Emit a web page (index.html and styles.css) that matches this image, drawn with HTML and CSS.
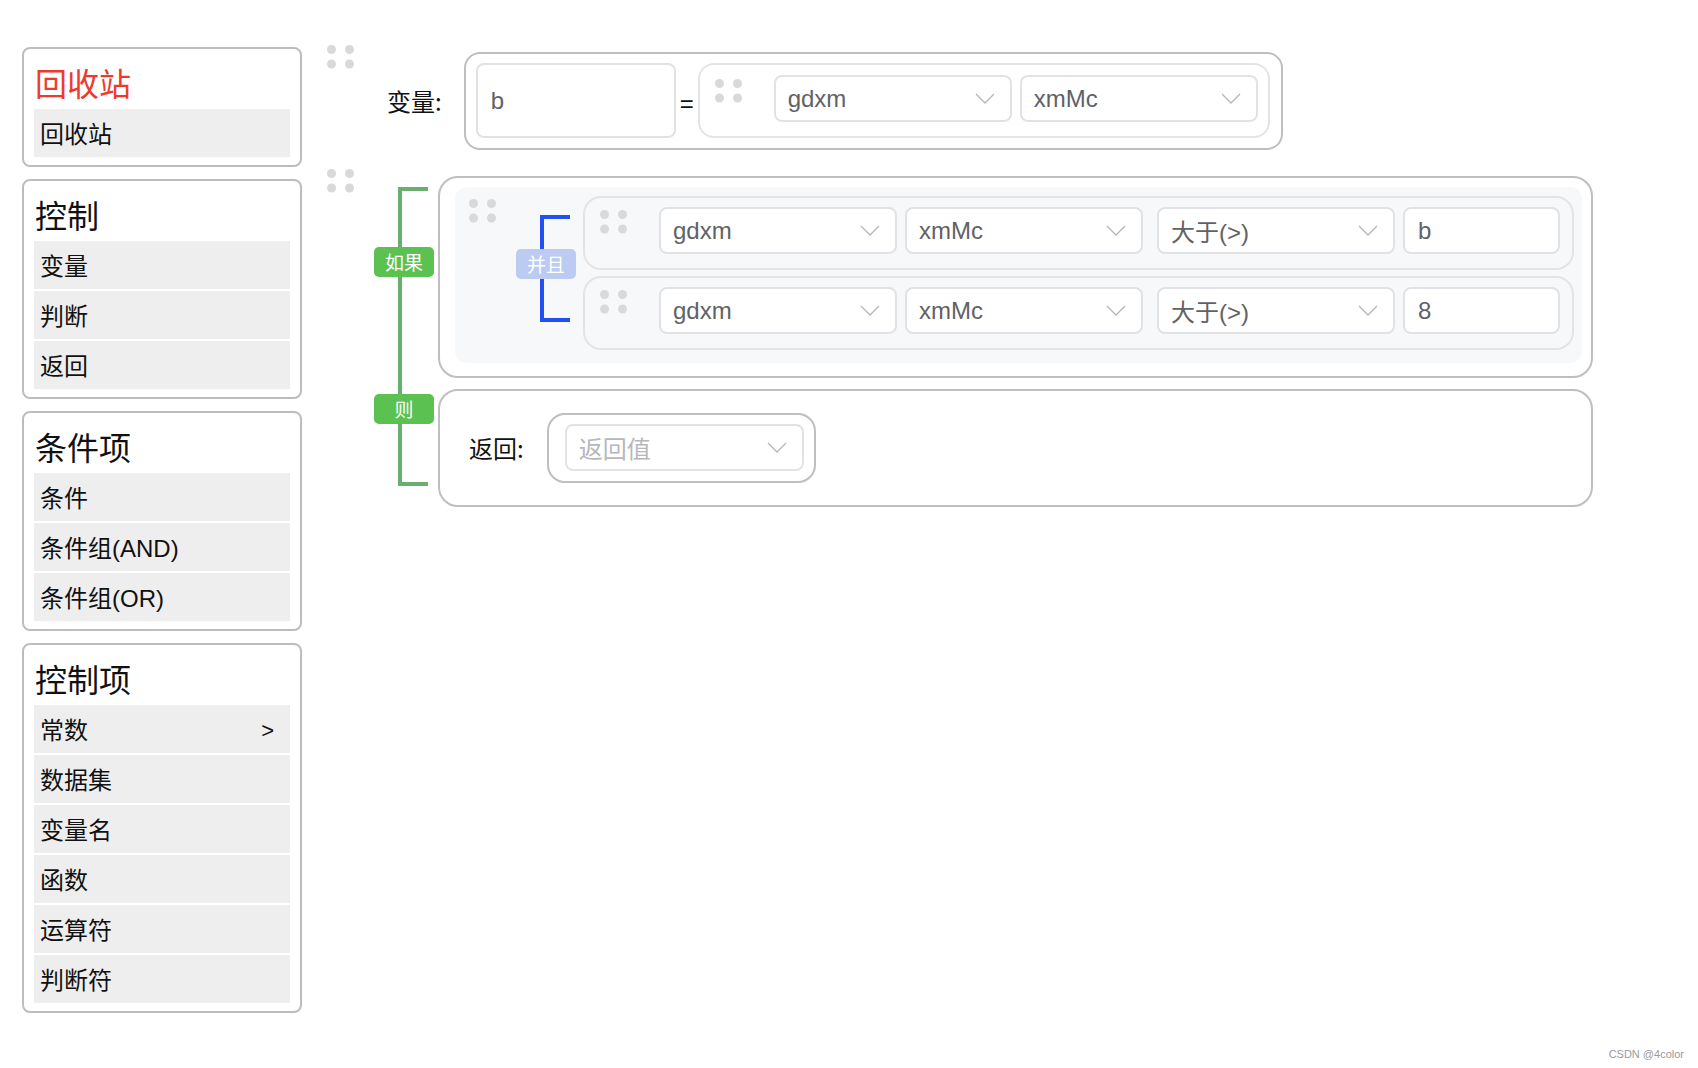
FILE: index.html
```html
<!DOCTYPE html>
<html lang="zh">
<head>
<meta charset="utf-8">
<title>规则编辑器</title>
<link rel="stylesheet" href="styles.css">
</head>
<body>
<div class="page">
  <aside class="sidebar">
    <section class="panel">
      <div class="panel-title red">回收站</div>
      <div class="item">回收站</div>
    </section>
    <section class="panel">
      <div class="panel-title">控制</div>
      <div class="item">变量</div>
      <div class="item">判断</div>
      <div class="item">返回</div>
    </section>
    <section class="panel">
      <div class="panel-title">条件项</div>
      <div class="item">条件</div>
      <div class="item">条件组(AND)</div>
      <div class="item">条件组(OR)</div>
    </section>
    <section class="panel">
      <div class="panel-title">控制项</div>
      <div class="item item-more"><span>常数</span><span class="more">&gt;</span></div>
      <div class="item">数据集</div>
      <div class="item">变量名</div>
      <div class="item">函数</div>
      <div class="item">运算符</div>
      <div class="item">判断符</div>
    </section>
  </aside>

  <main class="canvas">
    <div class="stmt">
      <span class="handle"><svg width="27" height="24" viewBox="0 0 27 24"><circle cx="4.5" cy="4.5" r="4.5"/><circle cx="22.5" cy="4.5" r="4.5"/><circle cx="4.5" cy="19" r="4.5"/><circle cx="22.5" cy="19" r="4.5"/></svg></span>
      <div class="var-body">
        <span class="var-label">变量:</span>
        <div class="var-box">
          <div class="field field-name">b</div>
          <span class="eq">=</span>
          <div class="expr">
            <span class="handle handle-inner"><svg width="27" height="24" viewBox="0 0 27 24"><circle cx="4.5" cy="4.5" r="4.5"/><circle cx="22.5" cy="4.5" r="4.5"/><circle cx="4.5" cy="19" r="4.5"/><circle cx="22.5" cy="19" r="4.5"/></svg></span>
            <div class="select"><span>gdxm</span><svg class="chev" width="20" height="11" viewBox="0 0 20 11"><polyline points="1,1 10,10 19,1"/></svg></div>
            <div class="select select-gap"><span>xmMc</span><svg class="chev" width="20" height="11" viewBox="0 0 20 11"><polyline points="1,1 10,10 19,1"/></svg></div>
          </div>
        </div>
      </div>
    </div>

    <div class="stmt stmt-if">
      <span class="handle"><svg width="27" height="24" viewBox="0 0 27 24"><circle cx="4.5" cy="4.5" r="4.5"/><circle cx="22.5" cy="4.5" r="4.5"/><circle cx="4.5" cy="19" r="4.5"/><circle cx="22.5" cy="19" r="4.5"/></svg></span>
      <div class="if-body">
        <div class="if-col">
          <div class="if-bracket"></div>
          <span class="badge badge-if">如果</span>
          <span class="badge badge-then">则</span>
        </div>
        <div class="if-boxes">
          <div class="if-box">
            <div class="group">
              <span class="handle handle-group"><svg width="27" height="24" viewBox="0 0 27 24"><circle cx="4.5" cy="4.5" r="4.5"/><circle cx="22.5" cy="4.5" r="4.5"/><circle cx="4.5" cy="19" r="4.5"/><circle cx="22.5" cy="19" r="4.5"/></svg></span>
              <div class="and-col">
                <div class="and-bracket"></div>
                <span class="badge badge-and">并且</span>
              </div>
              <div class="rows">
                <div class="cond">
                  <span class="handle handle-inner"><svg width="27" height="24" viewBox="0 0 27 24"><circle cx="4.5" cy="4.5" r="4.5"/><circle cx="22.5" cy="4.5" r="4.5"/><circle cx="4.5" cy="19" r="4.5"/><circle cx="22.5" cy="19" r="4.5"/></svg></span>
                  <div class="select"><span>gdxm</span><svg class="chev" width="20" height="11" viewBox="0 0 20 11"><polyline points="1,1 10,10 19,1"/></svg></div>
                  <div class="select select-gap"><span>xmMc</span><svg class="chev" width="20" height="11" viewBox="0 0 20 11"><polyline points="1,1 10,10 19,1"/></svg></div>
                  <div class="select select-op"><span>大于(&gt;)</span><svg class="chev" width="20" height="11" viewBox="0 0 20 11"><polyline points="1,1 10,10 19,1"/></svg></div>
                  <div class="field field-value">b</div>
                </div>
                <div class="cond">
                  <span class="handle handle-inner"><svg width="27" height="24" viewBox="0 0 27 24"><circle cx="4.5" cy="4.5" r="4.5"/><circle cx="22.5" cy="4.5" r="4.5"/><circle cx="4.5" cy="19" r="4.5"/><circle cx="22.5" cy="19" r="4.5"/></svg></span>
                  <div class="select"><span>gdxm</span><svg class="chev" width="20" height="11" viewBox="0 0 20 11"><polyline points="1,1 10,10 19,1"/></svg></div>
                  <div class="select select-gap"><span>xmMc</span><svg class="chev" width="20" height="11" viewBox="0 0 20 11"><polyline points="1,1 10,10 19,1"/></svg></div>
                  <div class="select select-op"><span>大于(&gt;)</span><svg class="chev" width="20" height="11" viewBox="0 0 20 11"><polyline points="1,1 10,10 19,1"/></svg></div>
                  <div class="field field-value">8</div>
                </div>
              </div>
            </div>
          </div>
          <div class="then-box">
            <span class="var-label ret-label">返回:</span>
            <div class="ret-wrap">
              <div class="select select-ret"><span class="placeholder">返回值</span><svg class="chev" width="20" height="11" viewBox="0 0 20 11"><polyline points="1,1 10,10 19,1"/></svg></div>
            </div>
          </div>
        </div>
      </div>
    </div>
  </main>
</div>
<div class="watermark">CSDN @4color</div>
</body>
</html>
```

FILE: styles.css
```css
html, body {
  margin: 0;
  padding: 0;
  background: #ffffff;
}
body {
  width: 1698px;
  height: 1068px;
  overflow: hidden;
  position: relative;
  font-family: "Liberation Sans", "Noto Sans CJK SC", sans-serif;
  color: #1a1a1a;
}
.page {
  display: flex;
  align-items: flex-start;
  padding: 45px 0 0 22px;
}

/* ---------- sidebar ---------- */
.sidebar {
  width: 280px;
  margin-top: 2px;
  display: flex;
  flex-direction: column;
  gap: 12px;
  flex: none;
}
.panel {
  border: 2px solid #bdbdbd;
  border-radius: 8px;
  padding: 10px 10px 6px 10px;
}
.panel-title {
  height: 50px;
  line-height: 47px;
  font-size: 32px;
  font-family: "Noto Sans CJK SC", sans-serif;
  color: #111;
  padding-left: 1px;
}
.panel-title.red {
  color: #ee3a2e;
}
.item {
  box-sizing: border-box;
  height: 48px;
  line-height: 45px;
  padding: 3px 16px 0 6px;
  margin-bottom: 2px;
  background: #eeeeee;
  font-size: 24px;
  color: #111;
}
.item-more {
  display: flex;
  justify-content: space-between;
}
.more {
  font-size: 22px;
}

/* ---------- canvas ---------- */
.canvas {
  margin-left: 25px;
  display: flex;
  flex-direction: column;
}
.stmt {
  display: flex;
  align-items: flex-start;
}
.handle {
  display: block;
  width: 27px;
  height: 24px;
  flex: none;
}
.handle svg {
  display: block;
  fill: #d9d9d9;
}
.var-body {
  display: flex;
  align-items: center;
  margin-left: 33px;
  margin-top: 7px;
}
.var-label {
  font-size: 24px;
  font-family: "Noto Sans CJK SC", sans-serif;
  color: #111;
  margin-right: 22px;
  line-height: 30px;
}
.var-box {
  display: flex;
  align-items: center;
  border: 2px solid #bfbfbf;
  border-radius: 16px;
  padding: 9px 11px 10px 10px;
}
.field {
  box-sizing: border-box;
  border: 2px solid #e1e2e6;
  border-radius: 8px;
  background: #fff;
  font-size: 24px;
  color: #606266;
  display: flex;
  align-items: center;
  padding-left: 13px;
}
.field-name {
  width: 200px;
  height: 75px;
}
.eq {
  width: 22px;
  text-align: center;
  font-size: 24px;
  color: #111;
  padding-top: 6px;
}
.expr {
  box-sizing: border-box;
  height: 75px;
  display: flex;
  align-items: flex-start;
  border: 2px solid #e3e4e8;
  border-radius: 16px;
  padding: 10px 10px 0 15px;
}
.handle-inner {
  margin-top: 4px;
  margin-right: 32px;
}
.select {
  box-sizing: border-box;
  width: 238px;
  height: 47px;
  border: 2px solid #e1e2e6;
  border-radius: 8px;
  background: #fff;
  display: flex;
  align-items: center;
  justify-content: space-between;
  padding: 0 15px 0 12px;
  font-size: 24px;
  color: #606266;
  flex: none;
}
.select-gap {
  margin-left: 8px;
}
.select-op {
  margin-left: 14px;
}
.chev {
  display: block;
  flex: none;
}
.chev polyline {
  fill: none;
  stroke: #b3b6bc;
  stroke-width: 1.3;
}

/* ---------- if statement ---------- */
.stmt-if {
  margin-top: 19px;
}
.if-body {
  display: flex;
  align-items: flex-start;
  margin-left: 20px;
  margin-top: 7px;
}
.if-col {
  position: relative;
  width: 60px;
  height: 331px;
  margin-right: 4px;
  flex: none;
}
.if-bracket {
  position: absolute;
  left: 24px;
  top: 11px;
  width: 26px;
  height: 291px;
  border: 4px solid #6aae70;
  border-right: none;
}
.badge {
  position: absolute;
  left: 0;
  width: 60px;
  height: 30px;
  line-height: 30px;
  text-align: center;
  border-radius: 5px;
  font-size: 19px;
  font-family: "Noto Sans CJK SC", sans-serif;
  color: #fff;
}
.badge-if {
  top: 71px;
  background: #5bc150;
}
.badge-then {
  top: 218px;
  background: #5bc150;
}
.if-boxes {
  display: flex;
  flex-direction: column;
  gap: 11px;
  width: 1155px;
}
.if-box {
  border: 2px solid #bfbfbf;
  border-radius: 20px;
  padding: 9px 9px 13px 15px;
}
.group {
  display: flex;
  align-items: flex-start;
  background: #f7f8fa;
  border-radius: 12px;
  padding: 9px 8px 13px 14px;
}
.handle-group {
  margin-top: 3px;
  margin-right: 20px;
}
.and-col {
  position: relative;
  width: 60px;
  height: 154px;
  margin-right: 7px;
  flex: none;
}
.and-bracket {
  position: absolute;
  left: 24px;
  top: 19px;
  width: 26px;
  height: 99px;
  border: 4px solid #2151f0;
  border-right: none;
}
.badge-and {
  top: 53px;
  background: #bccbf1;
}
.rows {
  display: flex;
  flex-direction: column;
  gap: 6px;
}
.cond {
  box-sizing: border-box;
  width: 991px;
  height: 74px;
  display: flex;
  align-items: flex-start;
  border: 2px solid #e3e4e8;
  border-radius: 18px;
  padding: 9px 12px 0 15px;
}
.cond .handle-inner {
  margin-top: 3px;
}
.field-value {
  width: 158px;
  height: 47px;
  margin-left: 8px;
}

/* ---------- then ---------- */
.then-box {
  display: flex;
  align-items: center;
  border: 2px solid #bfbfbf;
  border-radius: 20px;
  padding: 22px 30px 22px 29px;
}
.ret-label {
  margin-right: 23px;
}
.ret-wrap {
  border: 2px solid #bfbfbf;
  border-radius: 18px;
  padding: 9px 10px 10px 16px;
}
.select-ret {
  width: 239px;
}
.placeholder {
  color: #b5b7bd;
  font-family: "Noto Sans CJK SC", sans-serif;
}

.watermark {
  position: absolute;
  right: 14px;
  bottom: 8px;
  font-size: 11px;
  color: #9a9a9a;
  font-family: "Liberation Sans", sans-serif;
}
```
